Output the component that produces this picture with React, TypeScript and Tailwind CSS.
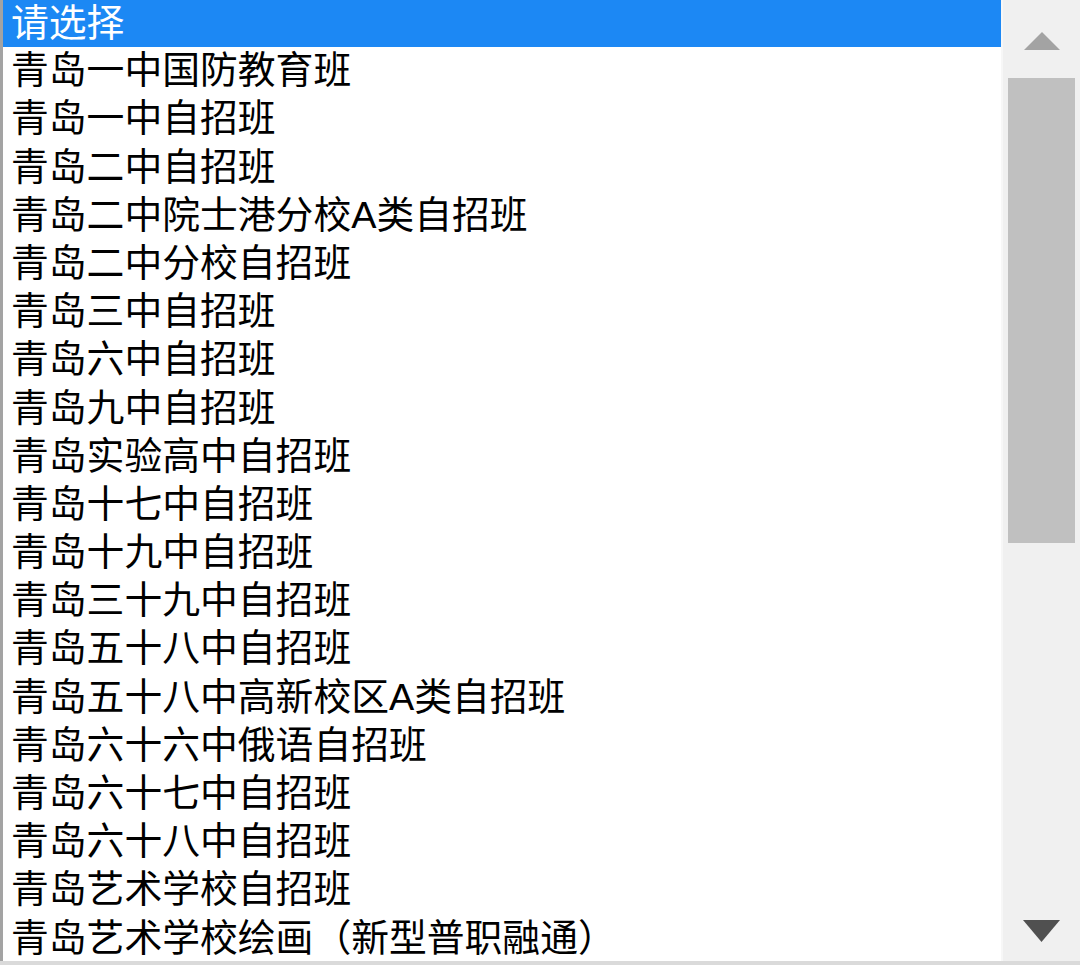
const OPTIONS = [
  "请选择",
  "青岛一中国防教育班",
  "青岛一中自招班",
  "青岛二中自招班",
  "青岛二中院士港分校A类自招班",
  "青岛二中分校自招班",
  "青岛三中自招班",
  "青岛六中自招班",
  "青岛九中自招班",
  "青岛实验高中自招班",
  "青岛十七中自招班",
  "青岛十九中自招班",
  "青岛三十九中自招班",
  "青岛五十八中自招班",
  "青岛五十八中高新校区A类自招班",
  "青岛六十六中俄语自招班",
  "青岛六十七中自招班",
  "青岛六十八中自招班",
  "青岛艺术学校自招班",
  "青岛艺术学校绘画（新型普职融通）",
];

export default function App() {
  return (
    <div className="flex h-[965px] w-[1080px] flex-col overflow-hidden bg-white">
      <div className="flex min-h-0 flex-1">
        <ul
          className="flex-1 overflow-hidden border-l-[3px] border-[#a3a3a3] text-[37.8px] text-black"
          style={{ fontFamily: '"Liberation Sans", "Noto Sans CJK SC", sans-serif' }}
        >
          {OPTIONS.map((label, i) => (
            <li
              key={label}
              className={
                i === 0
                  ? "flex h-[47px] items-center whitespace-nowrap bg-[#1c88f4] pl-[8px] leading-none text-white"
                  : "flex h-[48.2px] items-center whitespace-nowrap pl-[8px] leading-none"
              }
            >
              {label}
            </li>
          ))}
        </ul>
        <div className="flex w-[79px] flex-col border-l-2 border-[#f7f7f7] bg-[#f0f0f0]">
          <div className="flex h-[78px] items-start justify-center pt-[32px]">
            <svg width="36" height="18" viewBox="0 0 36 18">
              <polygon points="18,0 36,18 0,18" fill="#a3a3a3" />
            </svg>
          </div>
          <div className="mx-[5px] h-[465px] bg-[#c0c0c0]" />
          <div className="flex-1" />
          <div className="flex h-[41px] items-start justify-center">
            <svg width="37" height="22" viewBox="0 0 37 22">
              <polygon points="0,0 37,0 18.5,22" fill="#505050" />
            </svg>
          </div>
        </div>
      </div>
      <div className="h-[4px] bg-[#dadada]" />
    </div>
  );
}
